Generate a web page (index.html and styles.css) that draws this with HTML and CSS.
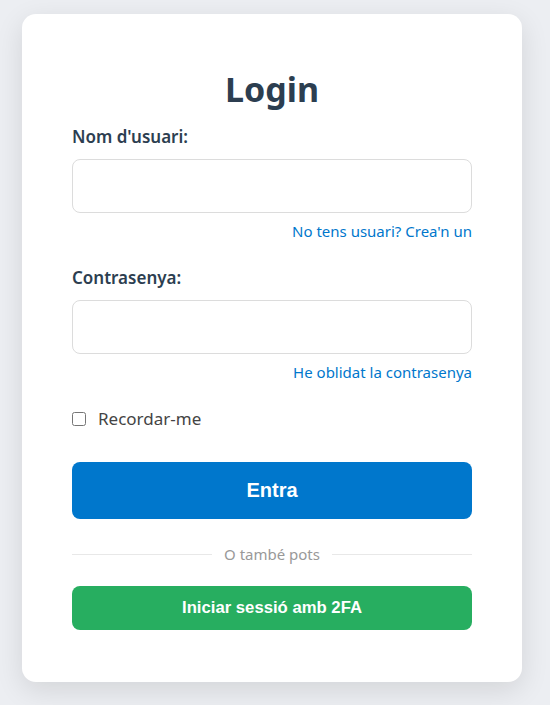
FILE: index.html
```html
<!DOCTYPE html>
<html lang="ca">
<head>
<meta charset="utf-8">
<title>Login</title>
<link rel="stylesheet" href="styles.css">
</head>
<body>
<div class="page">
  <form class="card">
    <h2 class="title">Login</h2>
    <div class="field">
      <label class="label" for="u">Nom d'usuari:</label>
      <input class="input" id="u" type="text">
      <div class="link-row"><a class="link" href="#">No tens usuari? Crea'n un</a></div>
    </div>
    <div class="field">
      <label class="label" for="p">Contrasenya:</label>
      <input class="input" id="p" type="password">
      <div class="link-row"><a class="link" href="#">He oblidat la contrasenya</a></div>
    </div>
    <label class="remember"><input class="check" type="checkbox"><span>Recordar-me</span></label>
    <button class="btn btn-primary" type="button">Entra</button>
    <div class="divider"><span class="divider-text">O també pots</span></div>
    <button class="btn btn-2fa" type="button">Iniciar sessió amb 2FA</button>
  </form>
</div>
</body>
</html>
```
FILE: styles.css
```css
* { box-sizing: border-box; }
html, body { margin: 0; padding: 0; }
body {
  background: #eceef2;
  font-family: "Noto Sans", "Open Sans", sans-serif;
  color: #2c3e50;
}
.page {
  padding: 14px 28px 24px 22px;
}
.card {
  width: 500px;
  background: #fff;
  border-radius: 14px;
  box-shadow: 0 8px 28px rgba(0,0,0,0.11);
  padding: 50px 50px 52px;
  display: flex;
  flex-direction: column;
}
.title {
  margin: 2px 0 14px;
  text-align: center;
  font-size: 34px;
  font-weight: 700;
  color: #2c3e50;
  line-height: 46px;
}
.field { display: flex; flex-direction: column; }
.label {
  font-size: 17px;
  font-weight: 600;
  color: #2c3e50;
  line-height: 22px;
  margin-bottom: 11px;
}
.input {
  height: 54px;
  border: 1px solid #dcdcdc;
  border-radius: 8px;
  font-size: 16px;
  padding: 0 12px;
  outline: none;
}
.link-row {
  text-align: right;
  margin-top: 8px;
  margin-bottom: 26px;
  line-height: 20px;
}
.field + .field .link-row { margin-bottom: 25px; }
.link {
  font-size: 15px;
  color: #0077cc;
  text-decoration: none;
}
.remember {
  display: flex;
  align-items: center;
  gap: 12px;
  font-size: 17px;
  color: #444;
  line-height: 24px;
  margin-bottom: 31px;
}
.check {
  margin: 0;
  width: 14px;
  height: 14px;
}
.btn {
  border: none;
  border-radius: 8px;
  color: #fff;
  font-family: "Liberation Sans", Arial, sans-serif;
  font-weight: 700;
  width: 100%;
}
.btn-primary {
  background: #0077cc;
  height: 57px;
  font-size: 20px;
}
.divider {
  display: flex;
  align-items: center;
  gap: 12px;
  margin: 25px 0 22px;
  font-size: 15px;
  color: #999;
  line-height: 20px;
}
.divider::before, .divider::after {
  content: "";
  flex: 1;
  height: 1px;
  background: #e8e8e8;
}
.btn-2fa {
  background: #27ae60;
  height: 44px;
  font-size: 16.7px;
}
```
